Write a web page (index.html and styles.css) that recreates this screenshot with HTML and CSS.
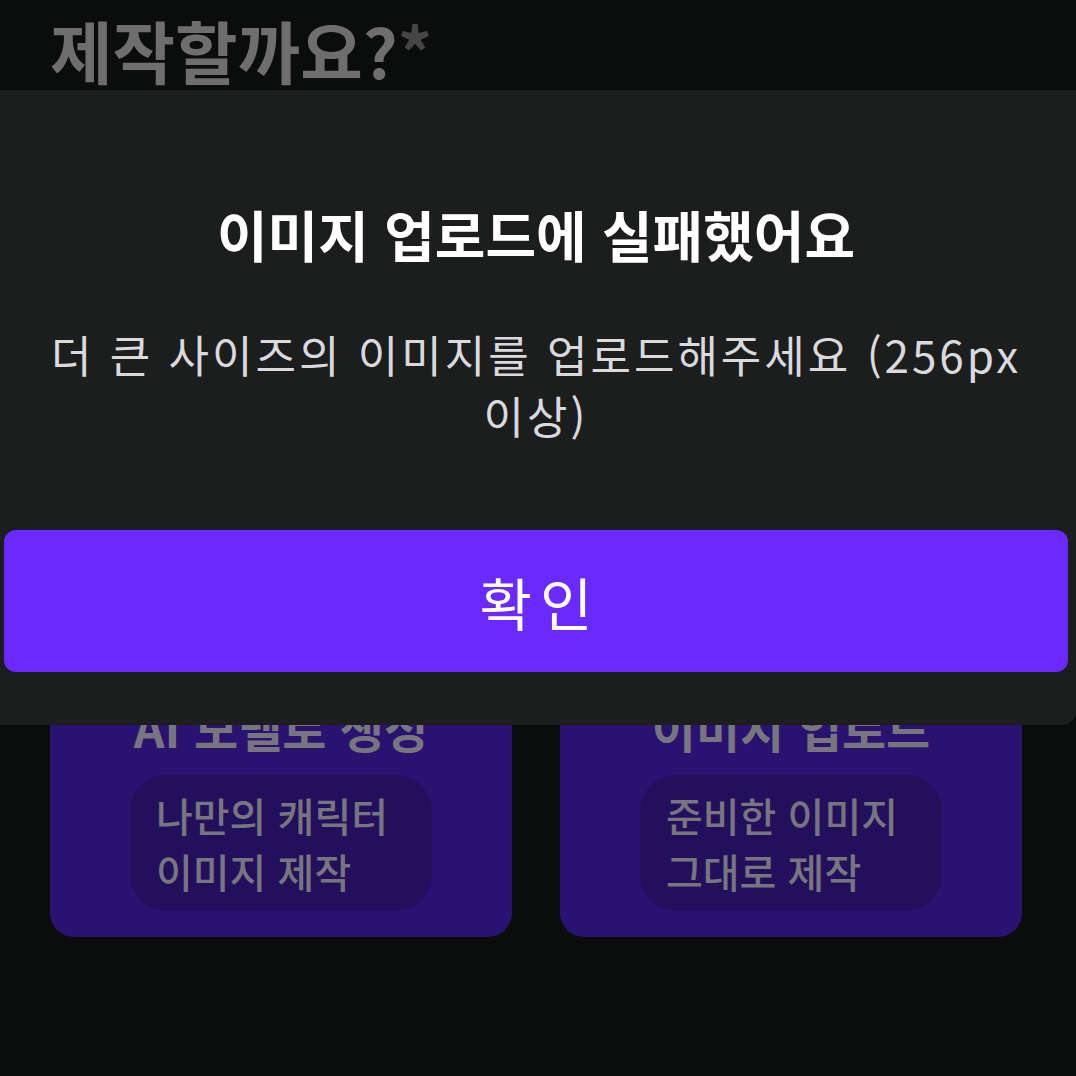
FILE: index.html
```html
<!DOCTYPE html>
<html lang="ko">
  <head>
    <meta charset="UTF-8" />
    <meta name="viewport" content="width=device-width, initial-scale=1.0" />
    <title>캐릭터 제작</title>
    <link rel="stylesheet" href="styles.css">
  </head>
  <body>
    <div class="page">
      <h1 class="ask">제작할까요?<span class="required">*</span></h1>

      <!-- Creation method cards -->
      <div class="cards">
        <div class="card">
          <div class="card-art"></div>
          <div class="card-title">AI 모델로 생성</div>
          <div class="card-desc">나만의 캐릭터<br />이미지 제작</div>
        </div>
        <div class="card">
          <div class="card-art"></div>
          <div class="card-title">이미지 업로드</div>
          <div class="card-desc">준비한 이미지<br />그대로 제작</div>
        </div>
      </div>
    </div>

    <!-- Upload error dialog -->
    <div class="dialog">
      <div class="dialog-title">이미지 업로드에 실패했어요</div>
      <p class="dialog-text">더 큰 사이즈의 이미지를 업로드해주세요 (256px 이상)</p>
      <button class="dialog-btn">확인</button>
    </div>
  </body>
</html>
```

FILE: styles.css
```css
:root {
  --page-bg: #0b0c0c;
  --dialog-bg: #1c1d1d;
  --primary: #6a29fd;
  --card-bg: #2a1270;
  --pill-bg: #22105d;
  --muted: #77757e;
}

body {
  margin: 0;
  height: 1076px;
  overflow: hidden;
  background: var(--page-bg);
  font-family: "Noto Sans CJK KR", "Noto Sans", sans-serif;
  position: relative;
}

.page {
  padding: 10px 50px 0;
}

.ask {
  margin: 0;
  font-size: 68px;
  line-height: 80px;
  font-weight: 700;
  color: #6e6e6e;
}

.required {
  color: #454545;
}

.cards {
  display: grid;
  grid-template-columns: 462px 462px;
  gap: 48px;
  margin-top: 51px;
}

.card {
  display: flex;
  flex-direction: column;
  align-items: center;
  padding-bottom: 26px;
  background: var(--card-bg);
  border-radius: 24px;
}

.card-art {
  height: 560px;
}

.card-title {
  font-size: 48px;
  line-height: 52px;
  font-weight: 700;
  color: var(--muted);
  margin-bottom: 22px;
}

.card-desc {
  box-sizing: border-box;
  width: 302px;
  padding: 12px 26px;
  border-radius: 36px;
  background: var(--pill-bg);
  font-size: 40px;
  line-height: 56px;
  font-weight: 500;
  color: var(--muted);
}

.dialog {
  position: absolute;
  top: 90px;
  left: 0;
  width: 1076px;
  height: 635px;
  box-sizing: border-box;
  padding: 113px 8px 0 4px;
  display: flex;
  flex-direction: column;
  align-items: center;
  background: var(--dialog-bg);
  border-radius: 0 0 14px 0;
}

.dialog-title {
  font-size: 55px;
  line-height: 60px;
  font-weight: 700;
  color: #fff;
}

.dialog-text {
  max-width: 1010px;
  margin: 61px 0 0;
  font-size: 44px;
  line-height: 61px;
  letter-spacing: 3px;
  text-align: center;
  color: #d9d9de;
}

.dialog-btn {
  align-self: stretch;
  height: 142px;
  margin-top: 84px;
  padding: 0 0 0 8px;
  border: none;
  border-radius: 12px;
  background: var(--primary);
  font-family: inherit;
  font-size: 57px;
  font-weight: 400;
  letter-spacing: 8px;
  color: #fff;
}
```
